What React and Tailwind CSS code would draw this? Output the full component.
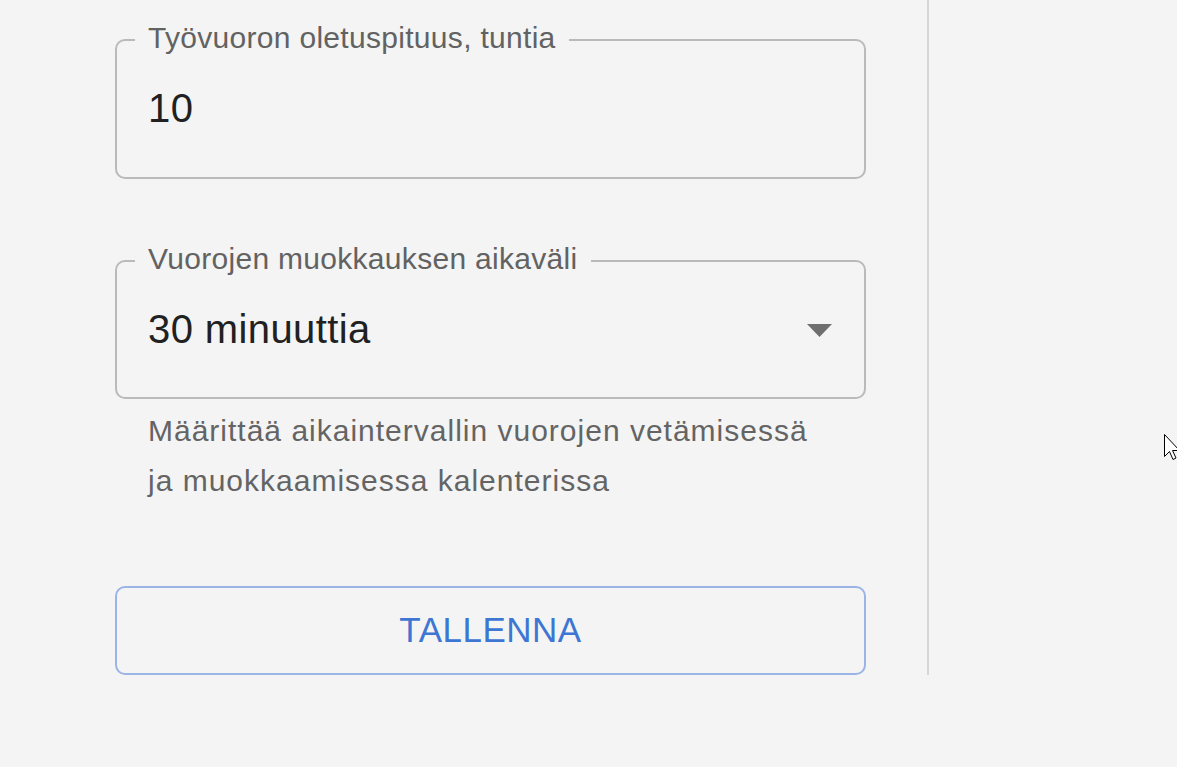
export default function App() {
  return (
    <div className="relative min-h-[767px] w-full overflow-hidden bg-[#f4f4f4] font-['Liberation_Sans',Arial,sans-serif]">
      <div className="w-[929px] border-r-2 border-[#d6d6d6] pl-[115px] pr-[61px] pt-[21px]">
        <form className="flex flex-col" onSubmit={(e) => e.preventDefault()}>
          <fieldset className="rounded-[10px] border-2 border-[#bababa] px-[18px] pb-[46px]">
            <legend className="px-[13px] pb-[8px] text-[30px] leading-[30px] tracking-[0.3px] text-[#626262]">
              <span className="relative top-[2px]">Työvuoron oletuspituus, tuntia</span>
            </legend>
            <div className="pl-[13px] pt-[26px] text-[40px] leading-[46px] tracking-[0.4px] text-[#212121]">
              10
            </div>
          </fieldset>

          <fieldset className="mt-[63px] rounded-[10px] border-2 border-[#bababa] px-[18px] pb-[45px]">
            <legend className="px-[13px] pb-[8px] text-[30px] leading-[30px] tracking-[0.3px] text-[#626262]">
              <span className="relative top-[2px]">Vuorojen muokkauksen aikaväli</span>
            </legend>
            <div className="flex items-center justify-between pl-[13px] pt-[26px]">
              <span className="text-[40px] leading-[46px] tracking-[0.4px] text-[#212121]">
                30 minuuttia
              </span>
              <svg width="25" height="13" viewBox="0 0 25 13" className="mr-[14px] mt-[2px]">
                <path d="M0 0 L25 0 L12.5 13 Z" fill="#6f6f6f" />
              </svg>
            </div>
          </fieldset>

          <p className="mt-[7px] pl-[33px] text-[30px] leading-[50px] tracking-[1px] text-[#646464]">
            Määrittää aikaintervallin vuorojen vetämisessä
            <br />
            ja muokkaamisessa kalenterissa
          </p>

          <button
            type="submit"
            className="mt-[80px] h-[89px] w-full rounded-[10px] border-2 border-[#9bb4e6] text-[35px] uppercase tracking-[0.5px] text-[#3d76d3]"
          >
            Tallenna
          </button>
        </form>
      </div>

      {/* mouse pointer */}
      <svg
        width="18"
        height="28"
        viewBox="0 0 18 28"
        className="absolute left-[1164px] top-[434px]"
      >
        <path
          d="M0.5 0.5 L0.5 22.5 L5.5 17.5 L9 25.5 L12 24 L8.5 16.5 L15.5 16.5 Z"
          fill="#ffffff"
          stroke="#000000"
          strokeWidth="1"
        />
      </svg>
    </div>
  );
}
